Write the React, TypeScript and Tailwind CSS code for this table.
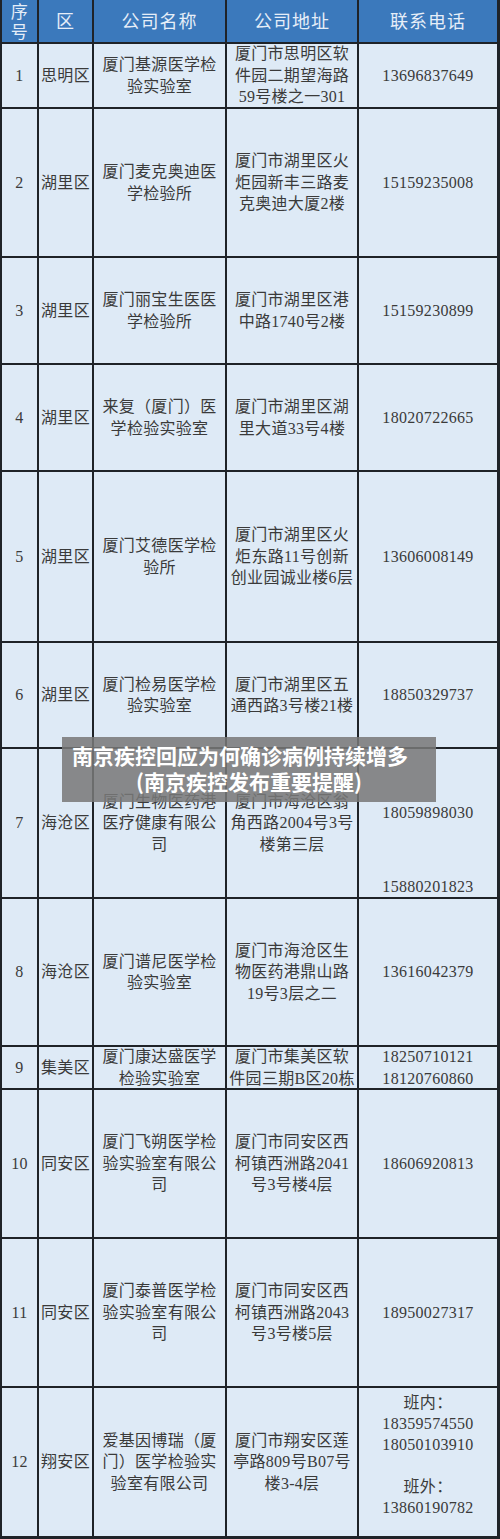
import React from "react";

type Row = {
  no: string;
  district: string;
  company: string[];
  address: string[];
  phone: React.ReactNode;
};

const Lines = ({ lines }: { lines: string[] }) => (
  <div className="flex flex-col items-center">
    {lines.map((l, i) => (
      <div key={i} className="whitespace-nowrap">
        {l}
      </div>
    ))}
  </div>
);

const rows: Row[] = [
  {
    no: "1",
    district: "思明区",
    company: ["厦门基源医学检", "验实验室"],
    address: ["厦门市思明区软", "件园二期望海路", "59号楼之一301"],
    phone: "13696837649",
  },
  {
    no: "2",
    district: "湖里区",
    company: ["厦门麦克奥迪医", "学检验所"],
    address: ["厦门市湖里区火", "炬园新丰三路麦", "克奥迪大厦2楼"],
    phone: "15159235008",
  },
  {
    no: "3",
    district: "湖里区",
    company: ["厦门丽宝生医医", "学检验所"],
    address: ["厦门市湖里区港", "中路1740号2楼"],
    phone: "15159230899",
  },
  {
    no: "4",
    district: "湖里区",
    company: ["来复（厦门）医", "学检验实验室"],
    address: ["厦门市湖里区湖", "里大道33号4楼"],
    phone: "18020722665",
  },
  {
    no: "5",
    district: "湖里区",
    company: ["厦门艾德医学检", "验所"],
    address: ["厦门市湖里区火", "炬东路11号创新", "创业园诚业楼6层"],
    phone: "13606008149",
  },
  {
    no: "6",
    district: "湖里区",
    company: ["厦门检易医学检", "验实验室"],
    address: ["厦门市湖里区五", "通西路3号楼21楼"],
    phone: "18850329737",
  },
  {
    no: "7",
    district: "海沧区",
    company: ["厦门生物医药港", "医疗健康有限公", "司"],
    address: ["厦门市海沧区翁", "角西路2004号3号", "楼第三层"],
    phone: (
      <div className="flex h-full flex-col items-center self-stretch pt-[53px]">
        <div>18059898030</div>
        <div className="mt-[52px]">15880201823</div>
      </div>
    ),
  },
  {
    no: "8",
    district: "海沧区",
    company: ["厦门谱尼医学检", "验实验室"],
    address: ["厦门市海沧区生", "物医药港鼎山路", "19号3层之二"],
    phone: "13616042379",
  },
  {
    no: "9",
    district: "集美区",
    company: ["厦门康达盛医学", "检验实验室"],
    address: ["厦门市集美区软", "件园三期B区20栋"],
    phone: <Lines lines={["18250710121", "18120760860"]} />,
  },
  {
    no: "10",
    district: "同安区",
    company: ["厦门飞朔医学检", "验实验室有限公", "司"],
    address: ["厦门市同安区西", "柯镇西洲路2041", "号3号楼4层"],
    phone: "18606920813",
  },
  {
    no: "11",
    district: "同安区",
    company: ["厦门泰普医学检", "验实验室有限公", "司"],
    address: ["厦门市同安区西", "柯镇西洲路2043", "号3号楼5层"],
    phone: "18950027317",
  },
  {
    no: "12",
    district: "翔安区",
    company: ["爱基因博瑞（厦", "门）医学检验实", "验室有限公司"],
    address: ["厦门市翔安区莲", "亭路809号B07号", "楼3-4层"],
    phone: (
      <div className="flex flex-col items-center pb-[15px] leading-[21px]">
        <div>班内：</div>
        <div>18359574550</div>
        <div>18050103910</div>
        <div>&nbsp;</div>
        <div>班外：</div>
        <div>13860190782</div>
      </div>
    ),
  },
];

const cellCls =
  "flex items-center justify-center text-center bg-[#deeaf6] text-[#3a3a3a]";

export default function App() {
  return (
    <div className="relative w-[500px] h-[1539px] bg-[#1f2328] font-['Liberation_Serif','Noto_Sans_CJK_SC',serif]">
      <div className="grid grid-cols-[35px_53px_131px_130px_138px] grid-rows-[42px_63px_147px_105px_105px_169px_104px_148px_146px_41px_147px_147px_148px] gap-[2px] pl-[2px] pr-[3px] pb-[3px] text-[16px] leading-[21.5px] tracking-[0.3px]">
        {/* header */}
        <div className="flex flex-col items-center justify-center bg-[#3b79bc] text-[17px] leading-[20px] text-[#e6eef8] font-['Noto_Sans_CJK_SC',sans-serif]">
          <div>序</div>
          <div>号</div>
        </div>
        {["区", "公司名称", "公司地址", "联系电话"].map((h) => (
          <div
            key={h}
            className="flex items-center justify-center bg-[#3b79bc] text-[18px] tracking-[1px] text-[#e6eef8] font-['Noto_Sans_CJK_SC',sans-serif]"
          >
            {h}
          </div>
        ))}
        {rows.map((r) => (
          <React.Fragment key={r.no}>
            <div className={cellCls}>{r.no}</div>
            <div className={cellCls}>{r.district}</div>
            <div className={cellCls}>
              <Lines lines={r.company} />
            </div>
            <div className={cellCls}>
              <Lines lines={r.address} />
            </div>
            <div className={cellCls}>{r.phone}</div>
          </React.Fragment>
        ))}
      </div>

      <div className="absolute left-[62px] top-[737px] w-[374px] h-[65px] bg-[rgba(120,120,120,0.86)] px-[10px] pt-[5px] pb-[8px] text-[21px] leading-[26px] font-bold text-white font-['Noto_Sans_CJK_SC',sans-serif]">
        <div className="whitespace-nowrap text-left">南京疾控回应为何确诊病例持续增多</div>
        <div className="whitespace-nowrap text-center">(南京疾控发布重要提醒)</div>
      </div>
    </div>
  );
}
